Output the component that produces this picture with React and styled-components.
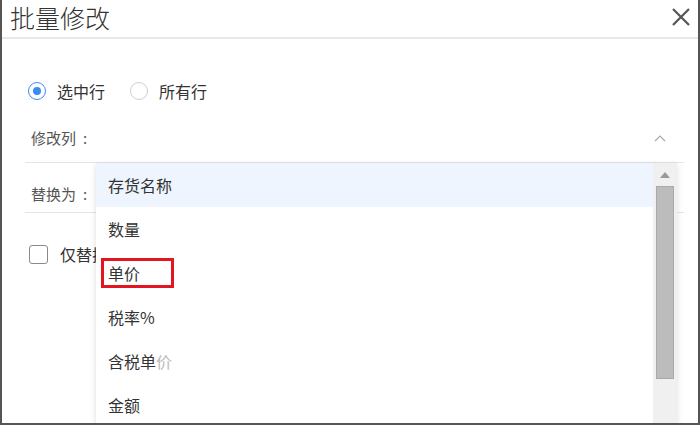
import React from "react"
import styled, { createGlobalStyle } from "styled-components"

const GlobalStyle = createGlobalStyle`
  html, body {
    margin: 0;
    padding: 0;
    background: #fff;
  }
  body {
    font-family: "Noto Sans CJK SC", "Noto Sans", sans-serif;
    color: #333;
  }
`

const columns = ["存货名称", "数量", "单价", "税率%", "含税单价", "金额"]

const App = () => {
  return (
    <>
      <GlobalStyle />
      <Frame>
        <Header>
          <Title>批量修改</Title>
          <Close aria-label="close">
            <svg width="20" height="20" viewBox="0 0 20 20">
              <path d="M2 2 L18 18 M18 2 L2 18" stroke="#555" strokeWidth="2.2" fill="none" />
            </svg>
          </Close>
        </Header>
        <Body>
          <RadioRow>
            <RadioItem>
              <Radio checked />
              选中行
            </RadioItem>
            <RadioItem>
              <Radio />
              所有行
            </RadioItem>
          </RadioRow>
          <FieldRow pad={13}>
            <Label>
              修改列<Colon>:</Colon>
            </Label>
            <Chevron>
              <svg width="12" height="8" viewBox="0 0 12 8">
                <path d="M1 7 L6 2 L11 7" stroke="#aaa" strokeWidth="1.2" fill="none" />
              </svg>
            </Chevron>
          </FieldRow>
          <FieldRow pad={7}>
            <Label>
              替换为<Colon>:</Colon>
            </Label>
          </FieldRow>
          <CheckRow>
            <Checkbox />
            仅替换
          </CheckRow>
        </Body>
        <Dropdown>
          <List>
            {columns.map((name, i) => (
              <Item key={name} active={i === 0}>
                {name === "单价" ? (
                  <Marked>单价</Marked>
                ) : name === "含税单价" ? (
                  <>
                    含税单<Faded>价</Faded>
                  </>
                ) : (
                  name
                )}
              </Item>
            ))}
          </List>
          <ScrollBar>
            <ArrowUp />
            <Thumb />
          </ScrollBar>
        </Dropdown>
      </Frame>
    </>
  )
}

export default App

const Frame = styled.div`
  position: relative;
  width: 700px;
  height: 425px;
  box-sizing: border-box;
  border-left: 2px solid #555;
  border-right: 2px solid #555;
  border-bottom: 2px solid #555;
  overflow: hidden;
  background: #fff;
`

const Header = styled.div`
  height: 39px;
  box-sizing: border-box;
  border-bottom: 2px solid #e8e8e8;
  display: flex;
  align-items: center;
  justify-content: space-between;
  padding: 0 6px 4px 8px;
`

const Title = styled.h1`
  margin: 0;
  font-size: 25px;
  font-weight: 300;
  line-height: 30px;
  color: #333;
`

const Close = styled.div`
  display: flex;
  width: 22px;
  height: 22px;
  align-items: center;
  justify-content: center;
`

const Body = styled.div`
  padding: 40px 14px 0 23px;
`

const RadioRow = styled.div`
  display: flex;
  align-items: center;
  gap: 22px;
  height: 24px;
  margin-bottom: 12px;
`

const RadioItem = styled.label`
  display: flex;
  align-items: center;
  gap: 11px;
  font-size: 16px;
  color: #333;
`

const Radio = styled.span`
  position: relative;
  width: 18px;
  height: 18px;
  box-sizing: border-box;
  border-radius: 50%;
  border: 1.5px solid ${(p) => (p.checked ? "#3d8bf2" : "#cfcfcf")};
  margin-left: 3px;

  &::after {
    content: "";
    display: ${(p) => (p.checked ? "block" : "none")};
    position: absolute;
    left: 50%;
    top: 50%;
    width: 8px;
    height: 8px;
    margin: -4px 0 0 -4px;
    border-radius: 50%;
    background: #3d8bf2;
  }
`

const FieldRow = styled.div`
  display: flex;
  align-items: flex-end;
  justify-content: space-between;
  height: ${(p) => (p.pad === 13 ? 48 : 50)}px;
  box-sizing: border-box;
  padding: 0 18px ${(p) => p.pad}px 6px;
  border-bottom: 1px solid #e4e4e4;
`

const Label = styled.span`
  font-size: 15px;
  line-height: 22px;
  color: #555;
`

const Colon = styled.span`
  margin-left: 7px;
`

const Chevron = styled.span`
  display: flex;
  align-items: center;
  height: 22px;
`

const CheckRow = styled.div`
  display: flex;
  align-items: center;
  gap: 12px;
  margin-top: 29px;
  padding-left: 4px;
  font-size: 16px;
  color: #333;
`

const Checkbox = styled.span`
  width: 19px;
  height: 19px;
  box-sizing: border-box;
  border: 1.5px solid #8a8a8a;
  border-radius: 3px;
`

const Dropdown = styled.div`
  position: absolute;
  left: 94px;
  top: 163px;
  width: 581px;
  height: 270px;
  display: flex;
  background: #fff;
  box-shadow: 0 2px 6px rgba(0, 0, 0, 0.14);
`

const List = styled.div`
  flex: 1;
  display: flex;
  flex-direction: column;
`

const Item = styled.div`
  height: 44px;
  flex-shrink: 0;
  display: flex;
  align-items: center;
  padding-left: 12px;
  font-size: 16px;
  color: #333;
  background: ${(p) => (p.active ? "#eef5fe" : "#fff")};
`

const Marked = styled.span`
  display: inline-flex;
  align-items: center;
  margin-left: -7px;
  padding: 0 4px;
  width: 73px;
  height: 30px;
  box-sizing: border-box;
  border: 3px solid #e3161f;
`

const Faded = styled.span`
  color: #bbb;
`

const ScrollBar = styled.div`
  width: 24px;
  background: #f0f0f0;
  display: flex;
  flex-direction: column;
  align-items: center;
`

const ArrowUp = styled.div`
  margin-top: 9px;
  width: 0;
  height: 0;
  border-left: 5px solid transparent;
  border-right: 5px solid transparent;
  border-bottom: 6px solid #999;
`

const Thumb = styled.div`
  margin-top: 8px;
  width: 18px;
  height: 193px;
  box-sizing: border-box;
  background: #bcbcbc;
  border: 1px solid #a9a9a9;
`
